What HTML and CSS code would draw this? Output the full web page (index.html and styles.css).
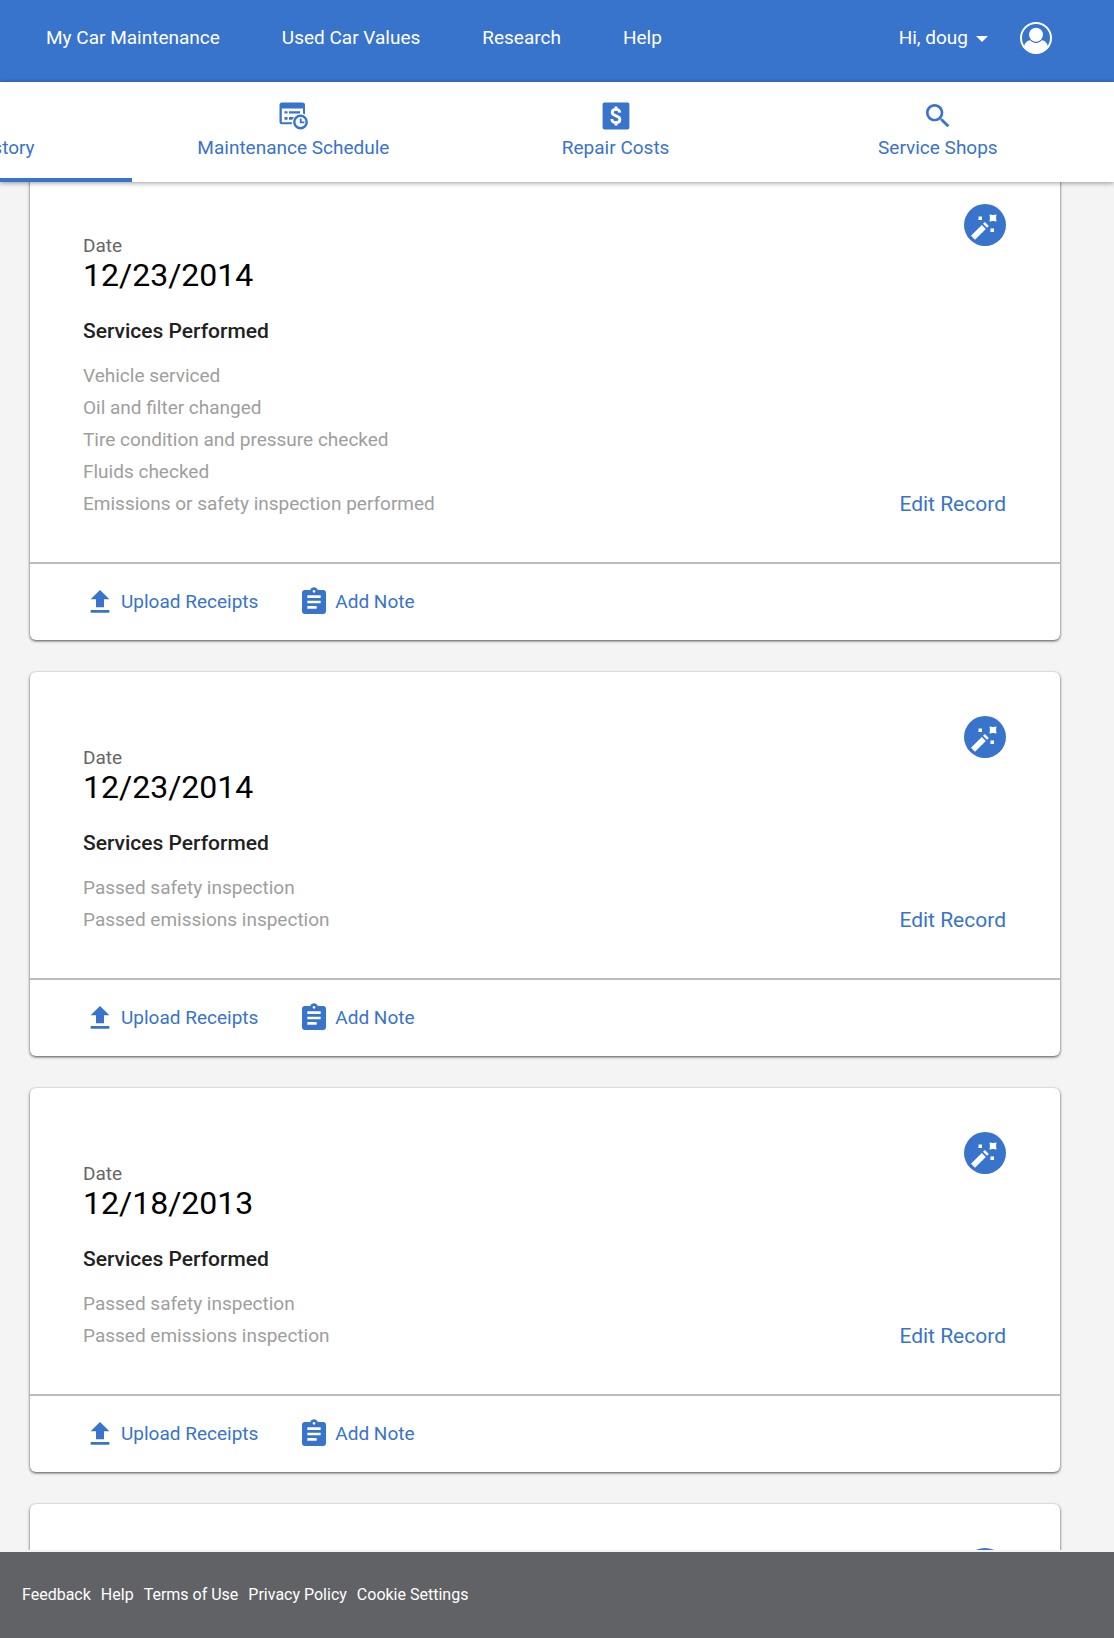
FILE: index.html
```html
<!DOCTYPE html>
<html lang="en">
<head>
  <meta charset="UTF-8" />
  <meta name="viewport" content="width=device-width, initial-scale=1.0"/>
  <title>My Car Maintenance - Service History</title>
  <link rel="stylesheet" href="styles.css">
</head>
<body>
  <!-- shared icons -->
  <svg class="icon-sprite" aria-hidden="true">
    <symbol id="icon-upload" viewBox="0 0 24 24">
      <path d="M9 16h6v-6h4l-7-7-7 7h4zm-4 2h14v2H5z"/>
    </symbol>
    <symbol id="icon-note" viewBox="0 0 24 24">
      <path d="M19 3h-4.18C14.4 1.84 13.3 1 12 1c-1.3 0-2.4.84-2.82 2H5c-1.1 0-2 .9-2 2v14c0 1.1.9 2 2 2h14c1.1 0 2-.9 2-2V5c0-1.1-.9-2-2-2zm-7 0c.55 0 1 .45 1 1s-.45 1-1 1-1-.45-1-1 .45-1 1-1zm2 14H7v-2h7v2zm3-4H7v-2h10v2zm0-4H7V7h10v2z"/>
    </symbol>
    <symbol id="icon-wand" viewBox="0 0 42 42">
      <path d="M7 31.800L17.800 21l4 4L11 35.800zM19 19.800l1.800-1.800 4 4-1.800 1.800z"/>
      <path d="M25.500 10.500q3.500.9 7 0-.9 3.500 0 7-3.500-.9-7 0 .9-3.500 0-7zM14.500 12.500H18V16h-3.500zM26.500 24.500H30V28h-3.500z"/>
    </symbol>
  </svg>

  <header class="site-header">
    <nav class="main-nav" aria-label="Main">
      <a href="#">My Car Maintenance</a>
      <a href="#">Used Car Values</a>
      <a href="#">Research</a>
      <a href="#">Help</a>
    </nav>
    <div class="account">
      <button type="button" class="account-button">Hi, doug <span class="caret"></span></button>
      <a href="#" class="avatar" aria-label="Profile">
        <svg viewBox="0 0 32 32">
          <circle cx="16" cy="16" r="15" fill="none" stroke="currentColor" stroke-width="2"/>
          <circle cx="16" cy="12.800" r="7" fill="currentColor"/>
          <path fill="currentColor" d="M4 25c.6-4 3-6.600 6.200-6.800 1.600 1.700 3.500 2.800 5.800 2.800s4.200-1.100 5.800-2.800C25 18.400 27.400 21 28 25c-3 4-7 6.400-12 6.400S7 29 4 25z"/>
        </svg>
      </a>
    </div>
  </header>

  <nav class="tabs" aria-label="Car maintenance">
    <ul class="tab-list">
      <li>
        <a href="#" class="tab active">
          <svg viewBox="0 0 24 24"><path d="M13 3a9 9 0 0 0-9 9H1l3.900 3.900L9 12H6a7 7 0 1 1 2.100 4.900l-1.400 1.500A9 9 0 1 0 13 3zm-1 5v5l4.300 2.500.7-1.200-3.500-2.100V8z"/></svg>
          Service History
        </a>
      </li>
      <li>
        <a href="#" class="tab">
          <svg viewBox="0 0 32 32">
            <path d="M5 2.500h20.500A2.500 2.500 0 0 1 28 5v9.500l-2-1V8.500H4.800v13.700h10.500l-.8 2H5a2.500 2.500 0 0 1-2.500-2.500V5A2.500 2.500 0 0 1 5 2.500z"/>
            <path d="M7.500 11.200h3v2.300h-3zM12 11.200h11v2.300H12zM7.500 17h3v2.800h-3zM12 17h5l-1.800 2.800H12z"/>
            <circle cx="23.500" cy="22" r="6.200" fill="#fff" stroke="currentColor" stroke-width="2.400"/>
            <path d="M22.800 18.400h1.800v3.100h2.800v1.800h-4.600z"/>
          </svg>
          Maintenance Schedule
        </a>
      </li>
      <li>
        <a href="#" class="tab">
          <svg viewBox="0 0 32 32">
            <rect x="2.600" y="2.600" width="26.800" height="26.800" rx="1.800"/>
            <path fill="none" stroke="#fff" stroke-width="2.800" d="M19.800 12.700c-.2-2.300-1.700-3.300-3.800-3.300-2.300 0-3.800 1.100-3.800 3 0 4.400 7.700 2.400 7.700 7 0 2-1.600 3.200-3.900 3.200-2.400 0-4.100-1.200-4.200-3.600M16 6.500v3.500M16 22v3.500"/>
          </svg>
          Repair Costs
        </a>
      </li>
      <li>
        <a href="#" class="tab">
          <svg viewBox="0 0 24 24"><path d="M15.500 14h-.79l-.28-.27C15.410 12.590 16 11.110 16 9.500 16 5.910 13.090 3 9.500 3S3 5.910 3 9.500 5.910 16 9.500 16c1.610 0 3.090-.59 4.230-1.570l.27.28v.79l5 4.990L20.490 19l-4.990-5zm-6 0C7.010 14 5 11.990 5 9.500S7.010 5 9.500 5 14 7.010 14 9.500 11.990 14 9.500 14z"/></svg>
          Service Shops
        </a>
      </li>
    </ul>
  </nav>

  <main class="content">
    <div class="records">
      <article class="card">
        <div class="card-body">
          <div class="details">
            <p class="date-label">Date</p>
            <p class="date">12/23/2014</p>
            <h2>Services Performed</h2>
            <ul class="services">
              <li>Vehicle serviced</li>
              <li>Oil and filter changed</li>
              <li>Tire condition and pressure checked</li>
              <li>Fluids checked</li>
              <li>Emissions or safety inspection performed</li>
            </ul>
          </div>
          <div class="side">
            <span class="badge"><svg><use href="#icon-wand"/></svg></span>
            <button type="button" class="edit">Edit Record</button>
          </div>
        </div>
        <div class="card-actions">
          <button type="button"><svg><use href="#icon-upload"/></svg>Upload Receipts</button>
          <button type="button"><svg><use href="#icon-note"/></svg>Add Note</button>
        </div>
      </article>

      <article class="card">
        <div class="card-body">
          <div class="details">
            <p class="date-label">Date</p>
            <p class="date">12/23/2014</p>
            <h2>Services Performed</h2>
            <ul class="services">
              <li>Passed safety inspection</li>
              <li>Passed emissions inspection</li>
            </ul>
          </div>
          <div class="side">
            <span class="badge"><svg><use href="#icon-wand"/></svg></span>
            <button type="button" class="edit">Edit Record</button>
          </div>
        </div>
        <div class="card-actions">
          <button type="button"><svg><use href="#icon-upload"/></svg>Upload Receipts</button>
          <button type="button"><svg><use href="#icon-note"/></svg>Add Note</button>
        </div>
      </article>

      <article class="card">
        <div class="card-body">
          <div class="details">
            <p class="date-label">Date</p>
            <p class="date">12/18/2013</p>
            <h2>Services Performed</h2>
            <ul class="services">
              <li>Passed safety inspection</li>
              <li>Passed emissions inspection</li>
            </ul>
          </div>
          <div class="side">
            <span class="badge"><svg><use href="#icon-wand"/></svg></span>
            <button type="button" class="edit">Edit Record</button>
          </div>
        </div>
        <div class="card-actions">
          <button type="button"><svg><use href="#icon-upload"/></svg>Upload Receipts</button>
          <button type="button"><svg><use href="#icon-note"/></svg>Add Note</button>
        </div>
      </article>

      <article class="card">
        <div class="card-body">
          <div class="details"></div>
          <div class="side">
            <span class="badge"><svg><use href="#icon-wand"/></svg></span>
          </div>
        </div>
      </article>
    </div>
  </main>

  <footer class="site-footer">
    <a href="#">Feedback</a>
    <a href="#">Help</a>
    <a href="#">Terms of Use</a>
    <a href="#">Privacy Policy</a>
    <a href="#">Cookie Settings</a>
  </footer>
</body>
</html>
```

FILE: styles.css
```css
:root {
  --blue: #3873cc;
  --page-bg: #f4f4f4;
  --footer-bg: #616265;
}

* {
  margin: 0;
  padding: 0;
  box-sizing: border-box;
}

body {
  display: flex;
  flex-direction: column;
  height: 100vh;
  background: var(--page-bg);
  color: #212121;
  font-family: Roboto, sans-serif;
  font-size: 19px;
  line-height: 24px;
}

a {
  color: inherit;
  text-decoration: none;
}

ul {
  list-style: none;
}

button {
  border: none;
  background: none;
  color: inherit;
  font: inherit;
  cursor: pointer;
}

svg {
  display: block;
  fill: currentColor;
}

.icon-sprite {
  position: absolute;
  width: 0;
  height: 0;
}

/* top bar */
.site-header {
  display: flex;
  flex-shrink: 0;
  justify-content: space-between;
  align-items: center;
  padding: 22px 62px 28px 46px;
  background: var(--blue);
  color: #fff;
}

.main-nav {
  display: flex;
  gap: 62px;
}

.account {
  display: flex;
  align-items: center;
  gap: 32px;
}

.account-button {
  display: flex;
  align-items: center;
  gap: 8px;
}

.caret {
  border: 6px solid transparent;
  border-top-color: #fff;
  border-bottom: none;
  margin-top: 2px;
}

.avatar svg {
  width: 32px;
  height: 32px;
}

/* tabs */
.tabs {
  flex-shrink: 0;
  overflow: hidden;
  position: relative;
  z-index: 1;
  background: #fff;
  color: var(--blue);
  box-shadow: 0 1px 5px rgba(0, 0, 0, 0.4);
}

.tab-list {
  display: flex;
  margin: 0 15px 0 -190px;
}

.tab-list li {
  flex: 1;
}

.tab {
  display: flex;
  flex-direction: column;
  align-items: center;
  gap: 4px;
  padding: 18px 0;
  border-bottom: 4px solid transparent;
}

.tab.active {
  border-bottom-color: var(--blue);
}

.tab svg {
  width: 32px;
  height: 32px;
}

/* service records */
.content {
  flex: 1;
  min-height: 0;
  overflow-y: auto;
  scrollbar-width: none;
}

.records {
  display: flex;
  flex-direction: column;
  gap: 32px;
  margin: -22px 54px 0 30px;
}

.card {
  background: #fff;
  border-radius: 6px;
  box-shadow: 0 1px 3px rgba(0, 0, 0, 0.7);
}

.card-body {
  display: flex;
  justify-content: space-between;
  padding: 44px 54px 42px 53px;
}

.details {
  padding-top: 30px;
}

.date-label {
  color: #666;
}

.date {
  color: #000;
  font-size: 32px;
  line-height: 34px;
}

.card h2 {
  margin: 27px 0 17px;
  font-size: 21px;
  font-weight: 500;
  line-height: 24px;
}

.services {
  color: #9e9e9e;
  line-height: 32px;
}

.side {
  display: flex;
  flex-direction: column;
  justify-content: space-between;
  align-items: flex-end;
}

.badge {
  border-radius: 50%;
  background: var(--blue);
  color: #fff;
}

.badge svg {
  width: 42px;
  height: 42px;
}

.edit {
  color: var(--blue);
  font-size: 21px;
  line-height: 32px;
}

.card-actions {
  display: flex;
  gap: 40px;
  padding: 22px 54px;
  border-top: 2px solid #bdbdbd;
  color: var(--blue);
}

.card-actions button {
  display: flex;
  align-items: center;
  gap: 5px;
}

.card-actions svg {
  width: 32px;
  height: 32px;
}

/* footer */
.site-footer {
  display: flex;
  flex-shrink: 0;
  gap: 10px;
  padding: 31px 22px;
  border-top: 2px solid var(--page-bg);
  background: var(--footer-bg);
  color: #fff;
  font-size: 16px;
}
```
